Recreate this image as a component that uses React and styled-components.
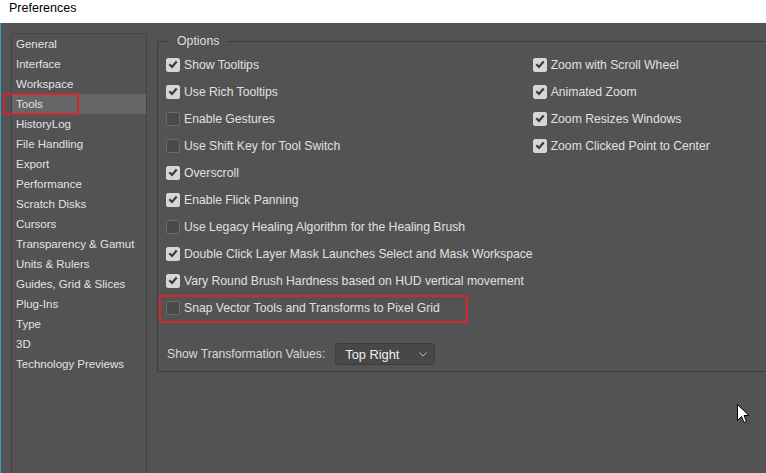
import styled, { createGlobalStyle } from 'styled-components'

const GlobalStyle = createGlobalStyle`
  html, body {
    margin: 0;
    padding: 0;
    background: #535353;
    overflow: hidden;
  }
  body {
    font-family: "Liberation Sans", "Noto Sans", Arial, sans-serif;
  }
`

const Window = styled('div')`
  width: 766px;
  height: 473px;
  display: flex;
  flex-direction: column;
  position: relative;
  overflow: hidden;
`

const TitleBar = styled('div')`
  height: 23px;
  background: #ffffff;
  color: #000;
  font-size: 12.5px;
  padding: 1px 0 0 9px;
  box-sizing: border-box;
  line-height: 14px;
  flex-shrink: 0;
`

const Body = styled('div')`
  flex: 1;
  display: flex;
  align-items: flex-start;
  background: #535353;
  border-left: 1px solid #3f9ac9;
  padding: 10px 0 0 10px;
  gap: 10px;
  color: #dedede;
  font-size: 12.2px;
`

const Sidebar = styled('ul')`
  list-style: none;
  margin: 0;
  padding: 0;
  width: 134px;
  height: 461px;
  flex-shrink: 0;
  border: 1px solid #444444;
  border-bottom: none;
  font-size: 11.5px;
`

const NavItem = styled('li')`
  position: relative;
  height: 20px;
  line-height: 20px;
  padding-left: 4px;
  white-space: nowrap;
  color: #e2e2e2;
  background: ${props => props.active ? '#666666' : 'transparent'};
`

const Highlight = styled('span')`
  position: absolute;
  border: 2px solid #d7252b;
  border-radius: 1px;
  box-sizing: border-box;
  pointer-events: none;
  left: ${props => props.left}px;
  top: ${props => props.top}px;
  width: ${props => props.w}px;
  height: ${props => props.h}px;
`

const Group = styled('fieldset')`
  margin: 0;
  margin-top: 1px;
  padding: 0 0 0 8px;
  width: 640px;
  height: 338px;
  box-sizing: border-box;
  border: 1px solid #3e3e3e;
  border-right: none;
  min-width: 0;
`

const Legend = styled('legend')`
  margin-left: 3px;
  padding: 0 8px 0 8px;
  font-size: 12.3px;
  color: #dedede;
`

const Columns = styled('div')`
  display: flex;
  margin-top: 3px;
`

const Column = styled('div')`
  display: flex;
  flex-direction: column;
  width: ${props => props.w}px;
`

const Row = styled('label')`
  position: relative;
  display: flex;
  align-items: center;
  height: 27px;
  gap: 4px;
  white-space: nowrap;
  color: #e0e0e0;
`

const Box = styled('span')`
  width: 14px;
  height: 14px;
  box-sizing: border-box;
  border-radius: 2px;
  flex-shrink: 0;
  display: flex;
  align-items: center;
  justify-content: center;
  background: ${props => props.checked ? '#d6d6d6' : '#4a4a4a'};
  border: 1px solid ${props => props.checked ? '#d6d6d6' : '#6b6b6b'};
`

const FieldRow = styled('div')`
  display: flex;
  align-items: center;
  gap: 10px;
  margin-top: 22px;
  margin-left: 1px;
  color: #d8d8d8;
`

const Select = styled('div')`
  width: 100px;
  height: 22px;
  box-sizing: border-box;
  border: 1px solid #3d3d3d;
  border-radius: 3px;
  background: #484848;
  display: flex;
  align-items: center;
  justify-content: space-between;
  padding: 0 7px 0 9px;
  color: #f0f0f0;
  font-size: 12.8px;
`

const Pointer = styled('svg')`
  position: absolute;
  left: 737px;
  top: 404px;
`

const Check = () => (
  <svg width='10' height='9' viewBox='0 0 10 9'>
    <path d='M1.3 4.3 L4 7 L8.7 1.5' fill='none' stroke='#3a3a3a' strokeWidth='2.2' />
  </svg>
)

const Option = ({ checked, children, mark }) => (
  <Row>
    <Box checked={checked}>{checked && <Check />}</Box>
    {children}
    {mark && <Highlight left={-7} top={1} w={309} h={28} />}
  </Row>
)

const sections = [
  'General', 'Interface', 'Workspace', 'Tools', 'HistoryLog', 'File Handling',
  'Export', 'Performance', 'Scratch Disks', 'Cursors', 'Transparency & Gamut',
  'Units & Rulers', 'Guides, Grid & Slices', 'Plug-Ins', 'Type', '3D',
  'Technology Previews'
]

const leftOptions = [
  { label: 'Show Tooltips', checked: true },
  { label: 'Use Rich Tooltips', checked: true },
  { label: 'Enable Gestures', checked: false },
  { label: 'Use Shift Key for Tool Switch', checked: false },
  { label: 'Overscroll', checked: true },
  { label: 'Enable Flick Panning', checked: true },
  { label: 'Use Legacy Healing Algorithm for the Healing Brush', checked: false },
  { label: 'Double Click Layer Mask Launches Select and Mask Workspace', checked: true },
  { label: 'Vary Round Brush Hardness based on HUD vertical movement', checked: true },
  { label: 'Snap Vector Tools and Transforms to Pixel Grid', checked: false, mark: true }
]

const rightOptions = [
  { label: 'Zoom with Scroll Wheel', checked: true },
  { label: 'Animated Zoom', checked: true },
  { label: 'Zoom Resizes Windows', checked: true },
  { label: 'Zoom Clicked Point to Center', checked: true }
]

const App = () => (
  <Window>
    <GlobalStyle />
    <TitleBar>Preferences</TitleBar>
    <Body>
      <Sidebar>
        {sections.map(name => (
          <NavItem key={name} active={name === 'Tools'}>
            {name}
            {name === 'Tools' && <Highlight left={-9} top={-1} w={76} h={22} />}
          </NavItem>
        ))}
      </Sidebar>
      <Group>
        <Legend>Options</Legend>
        <Columns>
          <Column w={371}>
            {leftOptions.map(o => (
              <Option key={o.label} checked={o.checked} mark={o.mark}>{o.label}</Option>
            ))}
          </Column>
          <Column w={240}>
            {rightOptions.map(o => (
              <Option key={o.label} checked={o.checked}>{o.label}</Option>
            ))}
          </Column>
        </Columns>
        <FieldRow>
          Show Transformation Values:
          <Select>
            Top Right
            <svg width='8' height='5' viewBox='0 0 8 5'>
              <path d='M0.5 0.5 L4 4 L7.5 0.5' fill='none' stroke='#bdbdbd' strokeWidth='1' />
            </svg>
          </Select>
        </FieldRow>
      </Group>
    </Body>
    <Pointer width='13' height='20' viewBox='0 0 13 20'>
      <path d='M0.5 0.5 L0.5 16.5 L4.5 12.5 L7 18.5 L9.5 17.5 L7 11.5 L12 11.5 Z' fill='#ffffff' stroke='#000000' strokeWidth='1' />
    </Pointer>
  </Window>
)

export default App
